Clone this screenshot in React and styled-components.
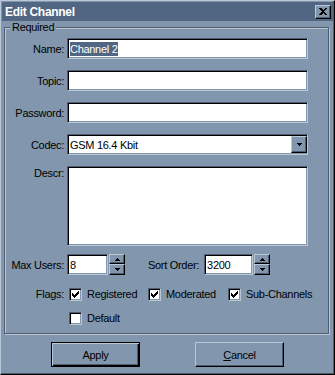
import styled, { createGlobalStyle } from "styled-components";

// slate desktop scheme
const face = "#8297ae";
const light = "#bac8d6";
const shadow = "#4e5e70";
const dark = "#000000";
const title = "#506682";

const GlobalStyle = createGlobalStyle`
  body {
    margin: 0;
    font-family: "Liberation Sans", Arial, sans-serif;
    font-size: 11px;
    letter-spacing: -0.3px;
    color: #000;
  }
`;

const Window = styled.div`
  width: 335px;
  height: 375px;
  box-sizing: border-box;
  background: ${face};
  border-top: 1px solid ${light};
  border-left: 1px solid ${light};
  border-right: 1px solid ${dark};
  border-bottom: 1px solid ${dark};
  box-shadow: inset -1px -1px 0 ${shadow};
  padding: 1px;
  display: flex;
  flex-direction: column;
`;

const TitleBar = styled.div`
  height: 19px;
  flex: none;
  background: ${title};
  display: flex;
  align-items: center;
  justify-content: space-between;
  padding: 0 2px 0 3px;
`;

const TitleText = styled.span`
  color: #fff;
  font-weight: bold;
  font-size: 12px;
`;

const CloseButton = styled.div`
  width: 16px;
  height: 14px;
  box-sizing: border-box;
  background: ${face};
  border-top: 1px solid ${light};
  border-left: 1px solid ${light};
  border-right: 1px solid ${dark};
  border-bottom: 1px solid ${dark};
  box-shadow: inset -1px -1px 0 ${shadow};
  display: flex;
  align-items: center;
  justify-content: center;
`;

const Body = styled.div`
  padding: 0 2px;
`;

const Group = styled.fieldset`
  width: 325px;
  height: 313px;
  box-sizing: border-box;
  margin: 0;
  padding: 4px 20px 0 0;
  border: 1px solid ${shadow};
  box-shadow: inset 1px 1px 0 ${light}, 1px 1px 0 ${light};
  min-inline-size: 0;
`;

const Legend = styled.legend`
  margin-left: 5px;
  padding: 0 2px;
  line-height: 13px;
  background: ${face};
`;

const Row = styled.div`
  display: flex;
  align-items: center;
  margin-top: ${(p) => p.$top || 0}px;
  height: ${(p) => p.$h || 21}px;
`;

const Label = styled.span`
  width: 59px;
  flex: none;
  text-align: right;
  margin-right: 3px;
  white-space: nowrap;
`;

const Field = styled.div`
  box-sizing: border-box;
  width: ${(p) => p.$w || 241}px;
  height: ${(p) => p.$h || 21}px;
  background: #fff;
  border-top: 1px solid ${shadow};
  border-left: 1px solid ${shadow};
  border-right: 1px solid ${light};
  border-bottom: 1px solid ${light};
  box-shadow: inset 1px 1px 0 ${dark}, inset -1px -1px 0 ${face};
  padding: 0 2px;
  display: flex;
  align-items: center;
  white-space: nowrap;
  flex: none;
`;

const Selected = styled.span`
  background: ${title};
  color: #fff;
  line-height: 14px;
  padding-right: 1px;
`;

const FieldText = styled.span`
  flex: 1;
`;

const DropButton = styled.div`
  width: 16px;
  height: 17px;
  box-sizing: border-box;
  margin-right: -2px;
  background: ${face};
  border-top: 1px solid ${light};
  border-left: 1px solid ${light};
  border-right: 1px solid ${dark};
  border-bottom: 1px solid ${dark};
  box-shadow: inset -1px -1px 0 ${shadow};
  display: flex;
  align-items: center;
  justify-content: center;
`;

const Spin = styled.div`
  display: flex;
  flex-direction: column;
  margin-left: 1px;
  flex: none;
`;

const SpinHalf = styled.div`
  width: 16px;
  height: ${(p) => p.$h}px;
  box-sizing: border-box;
  background: ${face};
  border-top: 1px solid ${light};
  border-left: 1px solid ${light};
  border-right: 1px solid ${dark};
  border-bottom: 1px solid ${dark};
  box-shadow: inset -1px -1px 0 ${shadow};
  display: flex;
  align-items: center;
  justify-content: center;
`;

const SideLabel = styled.span`
  margin: 0 5px 0 23px;
  white-space: nowrap;
`;

const Check = styled.div`
  width: ${(p) => p.$w || "auto"};
  display: flex;
  align-items: center;
  flex: none;
  margin-left: ${(p) => p.$left || 0}px;
  white-space: nowrap;
`;

const Box = styled.div`
  width: 13px;
  height: 13px;
  box-sizing: border-box;
  background: #fff;
  border-top: 1px solid ${shadow};
  border-left: 1px solid ${shadow};
  border-right: 1px solid ${light};
  border-bottom: 1px solid ${light};
  box-shadow: inset 1px 1px 0 ${dark}, inset -1px -1px 0 ${face};
  margin-right: 5px;
  position: relative;

  svg {
    position: absolute;
    left: -1px;
    top: -1px;
  }
`;

const Buttons = styled.div`
  display: flex;
  justify-content: center;
  gap: 55px;
  margin-top: 8px;
`;

const Button = styled.div`
  width: 89px;
  height: 25px;
  box-sizing: border-box;
  background: ${face};
  display: flex;
  align-items: center;
  justify-content: center;
  ${(p) =>
    p.$default
      ? `
    border: 1px solid ${dark};
    box-shadow: inset 1px 1px 0 ${light}, inset -1px -1px 0 ${dark}, inset -2px -2px 0 ${shadow};
  `
      : `
    border-top: 1px solid ${light};
    border-left: 1px solid ${light};
    border-right: 1px solid ${dark};
    border-bottom: 1px solid ${dark};
    box-shadow: inset -1px -1px 0 ${shadow};
  `}
`;

const CheckMark = () => (
  <svg width="13" height="13" viewBox="0 0 13 13" shapeRendering="crispEdges">
    <path d="M3 5h1v1h1v1h1v-1h1v-1h1v-1h1v-1h1v3h-1v1h-1v1h-1v1h-1v1h-1v-1h-1v-1h-1z" fill="#000" />
  </svg>
);

const Arrow = ({ w, h, up }) => (
  <svg width={w} height={h} viewBox={`0 0 ${w} ${h}`} shapeRendering="crispEdges">
    {up ? (
      <path d={`M${w / 2} 0L${w} ${h}H0z`} fill="#000" />
    ) : (
      <path d={`M0 0H${w}L${w / 2} ${h}z`} fill="#000" />
    )}
  </svg>
);

const CheckItem = ({ label, checked, w, left }) => (
  <Check $w={w} $left={left}>
    <Box>{checked && <CheckMark />}</Box>
    {label}
  </Check>
);

const SpinBox = ({ value, w }) => (
  <>
    <Field $w={w}>
      <FieldText>{value}</FieldText>
    </Field>
    <Spin>
      <SpinHalf $h={10}>
        <Arrow w={5} h={3} up />
      </SpinHalf>
      <SpinHalf $h={11}>
        <Arrow w={5} h={3} />
      </SpinHalf>
    </Spin>
  </>
);

const App = () => {
  return (
    <>
      <GlobalStyle />
      <Window>
        <TitleBar>
          <TitleText>Edit Channel</TitleText>
          <CloseButton>
            <svg width="8" height="7" viewBox="0 0 8 7" shapeRendering="crispEdges">
              <path d="M0 0h2l2 2 2-2h2L5 3.5 8 7H6L4 5 2 7H0l3-3.5z" fill="#000" />
            </svg>
          </CloseButton>
        </TitleBar>
        <Body>
          <Group>
            <Legend>Required</Legend>

            <Row>
              <Label>Name:</Label>
              <Field>
                <Selected>Channel 2</Selected>
              </Field>
            </Row>

            <Row $top={11}>
              <Label>Topic:</Label>
              <Field />
            </Row>

            <Row $top={11}>
              <Label>Password:</Label>
              <Field />
            </Row>

            <Row $top={11}>
              <Label>Codec:</Label>
              <Field>
                <FieldText>GSM 16.4 Kbit</FieldText>
                <DropButton>
                  <Arrow w={5} h={3} />
                </DropButton>
              </Field>
            </Row>

            <Row $top={11} $h={80} style={{ alignItems: "flex-start" }}>
              <Label style={{ lineHeight: "14px" }}>Descr:</Label>
              <Field $h={80} />
            </Row>

            <Row $top={8}>
              <Label>Max Users:</Label>
              <SpinBox value="8" w={41} />
              <SideLabel>Sort Order:</SideLabel>
              <SpinBox value="3200" w={49} />
            </Row>

            <Row $top={11} $h={16}>
              <Label>Flags:</Label>
              <CheckItem label="Registered" checked w="79px" left={2} />
              <CheckItem label="Moderated" checked w="80px" />
              <CheckItem label="Sub-Channels" checked />
            </Row>

            <Row $top={8} $h={16}>
              <Label />
              <CheckItem label="Default" left={2} />
            </Row>
          </Group>
        </Body>
        <Buttons>
          <Button $default>Apply</Button>
          <Button>
            <span>
              <u>C</u>ancel
            </span>
          </Button>
        </Buttons>
      </Window>
    </>
  );
};

export default App;
